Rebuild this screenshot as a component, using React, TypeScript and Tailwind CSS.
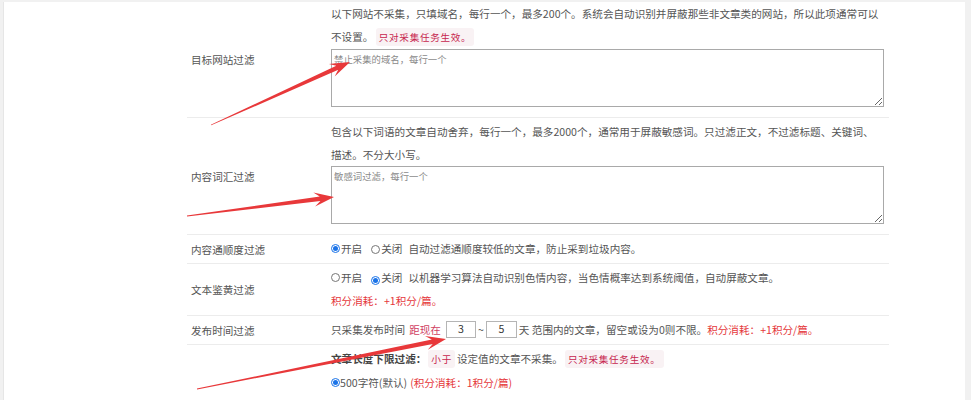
import React from "react";

const RED = "text-[#e5383b]";

function Radio({ checked }: { checked?: boolean }) {
  return checked ? (
    <span className="inline-flex h-[9px] w-[9px] items-center justify-center rounded-full border border-[#1a73e8] bg-white align-[-1px]">
      <span className="h-[5px] w-[5px] rounded-full bg-[#1a73e8]" />
    </span>
  ) : (
    <span className="inline-block h-[9px] w-[9px] rounded-full border border-[#767676] bg-white align-[-1px]" />
  );
}

function Code({ children }: { children: React.ReactNode }) {
  return (
    <span className="rounded-[3px] bg-[#f9f2f4] px-[3px] py-[2px] text-[9.6px] tracking-[0.7px] text-[#c7254e]">
      {children}
    </span>
  );
}

function Row({ label, first, children }: { label?: string; first?: boolean; children: React.ReactNode }) {
  return (
    <div className={first ? "flex" : "flex border-t border-[#ececec]"}>
      <div className="flex w-[144px] shrink-0 items-center pl-[4px] text-[#555]">{label}</div>
      <div className={first ? "flex-1 pb-[3px]" : "flex-1 pt-[2px] pb-[3px]"}>{children}</div>
    </div>
  );
}

function Area({ placeholder }: { placeholder: string }) {
  return (
    <textarea
      readOnly
      placeholder={placeholder}
      className="mb-[7px] block h-[58px] w-[553px] border border-[#a9a9a9] bg-white p-[2px] text-[9.4px] leading-[14px] placeholder:text-[#8a8a8a] outline-none"
    />
  );
}

type P = [number, number];

function arrowPoints(tail: P, tip: P, head = 20, hw = 7) {
  const dx = tip[0] - tail[0];
  const dy = tip[1] - tail[1];
  const len = Math.hypot(dx, dy);
  const ux = dx / len;
  const uy = dy / len;
  const nx = -uy;
  const ny = ux;
  const at = (d: number, w: number): string =>
    `${(tip[0] - ux * d + nx * w).toFixed(1)},${(tip[1] - uy * d + ny * w).toFixed(1)}`;
  return [
    `${tail[0] + nx * 0.4},${tail[1] + ny * 0.4}`,
    at(head * 0.7, 2.2),
    at(head, hw),
    `${tip[0]},${tip[1]}`,
    at(head, -hw),
    at(head * 0.7, -2.2),
    `${tail[0] - nx * 0.4},${tail[1] - ny * 0.4}`,
  ].join(" ");
}

const ARROWS: { tail: P; tip: P }[] = [
  { tail: [211, 125], tip: [350, 62] },
  { tail: [187, 216], tip: [334, 197] },
  { tail: [197, 389], tip: [446, 339] },
];

export default function App() {
  return (
    <div className="relative flex h-[400px] w-[971px] overflow-hidden bg-[#f1f1f1] font-['Noto_Sans_CJK_SC','Noto_Sans',sans-serif] text-[10.6px] leading-[23px] text-[#555]">
      <div className="mt-[2px] ml-[3px] mr-[6px] flex-1 border-l border-[#e6e6e6] bg-white">
        <div className="ml-[183px] w-[702px]">
          <Row label="目标网站过滤" first>
            <div>以下网站不采集，只填域名，每行一个，最多200个。系统会自动识别并屏蔽那些非文章类的网站，所以此项通常可以</div>
            <div>
              不设置。 <Code>只对采集任务生效。</Code>
            </div>
            <Area placeholder="禁止采集的域名，每行一个" />
          </Row>

          <Row label="内容词汇过滤">
            <div className="whitespace-nowrap">包含以下词语的文章自动舍弃，每行一个，最多2000个，通常用于屏蔽敏感词。只过滤正文，不过滤标题、关键词、</div>
            <div>描述。不分大小写。</div>
            <Area placeholder="敏感词过滤，每行一个" />
          </Row>

          <Row label="内容通顺度过滤">
            <div className="flex items-center whitespace-nowrap">
              <Radio checked />
              <span className="ml-[1px]">开启</span>
              <span className="ml-[9px]"><Radio /></span>
              <span className="ml-[1px]">关闭</span>
              <span className="ml-[6px]">自动过滤通顺度较低的文章，防止采到垃圾内容。</span>
            </div>
          </Row>

          <Row label="文本鉴黄过滤">
            <div className="flex items-center whitespace-nowrap">
              <Radio />
              <span className="ml-[1px]">开启</span>
              <span className="ml-[9px]"><Radio checked /></span>
              <span className="ml-[1px]">关闭</span>
              <span className="ml-[6px]">以机器学习算法自动识别色情内容，当色情概率达到系统阈值，自动屏蔽文章。</span>
            </div>
            <div className={RED}>积分消耗：+1积分/篇。</div>
          </Row>

          <Row label="发布时间过滤">
            <div className="flex items-center whitespace-nowrap">
              <span>只采集发布时间</span>
              <span className="ml-[4px] text-[#d0405f]">距现在</span>
              <span className="ml-[5px] flex h-[17px] w-[30px] items-center justify-center border border-[#b5b5b5] leading-none text-[#333]">3</span>
              <span className="mx-[2px]">~</span>
              <span className="flex h-[17px] w-[31px] items-center justify-center border border-[#b5b5b5] leading-none text-[#333]">5</span>
              <span className="ml-[2px]">天 范围内的文章，留空或设为0则不限。</span>
              <span className={RED}>积分消耗：+1积分/篇。</span>
            </div>
          </Row>

          <Row>
            <div className="whitespace-nowrap">
              <b className="font-bold text-[#444]">文章长度下限过滤：</b>
              <span className="ml-[2px]"><Code>小于</Code></span>
              <span className="ml-[2px]">设定值的文章不采集。</span>
              <span className="ml-[2px]"><Code>只对采集任务生效。</Code></span>
            </div>
            <div className="flex items-center whitespace-nowrap">
              <Radio checked />
              <span>500字符(默认)</span>
              <span className={`ml-[3px] ${RED}`}>(积分消耗：1积分/篇)</span>
            </div>
          </Row>
        </div>
      </div>

      <svg className="pointer-events-none absolute inset-0" width="971" height="400" viewBox="0 0 971 400">
        {ARROWS.map((a, i) => (
          <polygon key={i} points={arrowPoints(a.tail, a.tip)} fill="#e8383a" />
        ))}
      </svg>
    </div>
  );
}
